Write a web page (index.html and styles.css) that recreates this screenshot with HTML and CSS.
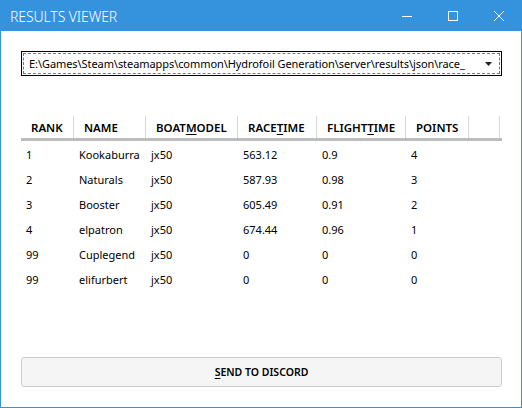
FILE: index.html
```html
<!DOCTYPE html>
<html>
<head>
<meta charset="utf-8">
<link rel="stylesheet" href="styles.css">
</head>
<body>
<div class="window">
  <div class="titlebar">
    <span class="title">RESULTS VIEWER</span>
    <div class="controls">
      <span class="ctl"><svg width="10" height="10" viewBox="0 0 10 10"><path d="M0 5.5h10" stroke="#fff" stroke-width="1"/></svg></span>
      <span class="ctl"><svg width="10" height="10" viewBox="0 0 10 10"><rect x="0.5" y="0.5" width="9" height="9" fill="none" stroke="#fff" stroke-width="1"/></svg></span>
      <span class="ctl"><svg width="10" height="10" viewBox="0 0 10 10"><path d="M0 0L10 10M10 0L0 10" stroke="#fff" stroke-width="1"/></svg></span>
    </div>
  </div>
  <div class="content">
    <div class="combo">
      <div class="focus">
        <span class="combo-text">E:\Games\Steam\steamapps\common\Hydrofoil Generation\server\results\json\race_</span>
        <svg class="arrow" width="7" height="4" viewBox="0 0 7 4"><path d="M0 0h7L3.5 4z" fill="#222"/></svg>
      </div>
    </div>
    <div class="grid">
      <div class="row head">
        <div class="c c1">RANK</div>
        <div class="c c2">NAME</div>
        <div class="c c3">BOAT<u>M</u>ODEL</div>
        <div class="c c4">RACE<u>T</u>IME</div>
        <div class="c c5">FLIGHT<u>T</u>IME</div>
        <div class="c c6">POINTS</div>
        <div class="c c7"></div>
      </div>
      <div class="row"><div class="c c1">1</div><div class="c c2">Kookaburra</div><div class="c c3">jx50</div><div class="c c4">563.12</div><div class="c c5">0.9</div><div class="c c6">4</div></div>
      <div class="row"><div class="c c1">2</div><div class="c c2">Naturals</div><div class="c c3">jx50</div><div class="c c4">587.93</div><div class="c c5">0.98</div><div class="c c6">3</div></div>
      <div class="row"><div class="c c1">3</div><div class="c c2">Booster</div><div class="c c3">jx50</div><div class="c c4">605.49</div><div class="c c5">0.91</div><div class="c c6">2</div></div>
      <div class="row"><div class="c c1">4</div><div class="c c2">elpatron</div><div class="c c3">jx50</div><div class="c c4">674.44</div><div class="c c5">0.96</div><div class="c c6">1</div></div>
      <div class="row"><div class="c c1">99</div><div class="c c2">Cuplegend</div><div class="c c3">jx50</div><div class="c c4">0</div><div class="c c5">0</div><div class="c c6">0</div></div>
      <div class="row"><div class="c c1">99</div><div class="c c2">elifurbert</div><div class="c c3">jx50</div><div class="c c4">0</div><div class="c c5">0</div><div class="c c6">0</div></div>
    </div>
    <button class="send"><u>S</u>END TO DISCORD</button>
  </div>
</div>
</body>
</html>
```
FILE: styles.css
```css
* { box-sizing: border-box; }
html, body { margin: 0; padding: 0; background: #fff; }
body { width: 522px; height: 408px; overflow: hidden; font-family: "Noto Sans", "Open Sans", sans-serif; font-size: 11px; color: #000; }
.window { width: 522px; height: 408px; border: 1px solid #3592dd; border-top: 0; display: flex; flex-direction: column; }
.titlebar { height: 31px; background: #3592dd; display: flex; align-items: center; justify-content: space-between; margin: 0 -1px; padding-left: 10px; }
.title { color: #fff; font-size: 14px; font-weight: 300; letter-spacing: -0.1px; padding-top: 2px; }
.controls { display: flex; height: 100%; }
.ctl { width: 46px; display: flex; align-items: center; justify-content: center; }
.content { flex: 1; display: flex; flex-direction: column; padding: 20px 19px 20px 20px; }
.combo { height: 25px; border: 1px solid #000; padding: 1px; }
.focus { height: 100%; border: 1px dashed #777; display: flex; align-items: center; padding-left: 5px; padding-right: 7px; }
.combo-text { flex: 1; white-space: nowrap; overflow: hidden; letter-spacing: -0.07px; }
.arrow { margin-left: 6px; }
.grid { margin-top: 40px; }
.row { display: flex; height: 25px; align-items: center; padding-top: 1px; }
.row.head { height: 25px; border-bottom: 3px solid #bcbcbc; align-items: stretch; padding-top: 0; }
.head .c { border-right: 1px solid #d9d9d9; padding-left: 10px; font-size: 11.5px; font-weight: 600; display: flex; align-items: center; }
.head u { text-decoration-thickness: 1px; text-underline-offset: 2px; }
.c { white-space: nowrap; padding-left: 5px; }
.c1 { width: 53px; }
.c2 { width: 72px; }
.c3 { width: 92px; }
.c4 { width: 79px; }
.c5 { width: 89px; }
.c6 { width: 63px; }
.c7 { width: 31px; }
.send { margin-top: auto; height: 30px; width: 100%; background: #f5f5f5; border: 1px solid #cccccc; border-radius: 3px; font-family: inherit; font-size: 10.5px; font-weight: 600; color: #000; padding: 0; }
.send u { text-decoration-thickness: 1px; text-underline-offset: 2px; }
```
